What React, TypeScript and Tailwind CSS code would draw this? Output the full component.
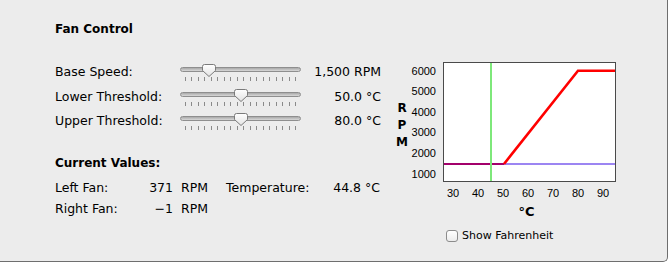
import React from 'react';

const TICKS = Array.from({ length: 18 });

function Slider({ thumb }: { thumb: number }) {
  return (
    <div className="relative w-[121px] h-full flex flex-col pt-[6.5px]">
      <div className="h-[5px] rounded-full border border-[#8e8e8e] bg-gradient-to-b from-[#a9a9a9] to-[#d8d8d8]" />
      <div className="mt-[5.5px] h-[4px] flex justify-between px-[5px]">
        {TICKS.map((_, i) => (
          <div key={i} className="w-px h-full bg-[#8a8a8a]" />
        ))}
      </div>
      <svg
        className="absolute top-[3.5px]"
        style={{ left: thumb }}
        width="14"
        height="13"
        viewBox="0 0 14 13"
      >
        <defs>
          <linearGradient id="thumbFill" x1="0" y1="0" x2="0" y2="1">
            <stop offset="0" stopColor="#ffffff" />
            <stop offset="1" stopColor="#e2e2e2" />
          </linearGradient>
        </defs>
        <path
          d="M2.5 0.5 H11.5 Q13.5 0.5 13.5 2.5 V6.5 L7 12.5 L0.5 6.5 V2.5 Q0.5 0.5 2.5 0.5 Z"
          fill="url(#thumbFill)"
          stroke="#7a7a7a"
          strokeWidth="1"
        />
      </svg>
    </div>
  );
}

function SliderRow({ label, value, thumb, h }: { label: string; value: string; thumb: number; h: string }) {
  return (
    <div className={`flex items-center ${h}`}>
      <div className="w-[125px]">{label}</div>
      <Slider thumb={thumb} />
      <div className="w-[80px] text-right">{value}</div>
    </div>
  );
}

function Chart() {
  const yLabels = ['6000', '5000', '4000', '3000', '2000', '1000'];
  const xLabels = ['30', '40', '50', '60', '70', '80', '90'];
  return (
    <div className="ml-[14px] pt-[2px] flex flex-col">
      <div className="flex">
        <div className="w-[14px] flex flex-col items-center justify-center pt-[4px] font-bold text-[12px] leading-[17px]">
          <span>R</span>
          <span>P</span>
          <span>M</span>
        </div>
        <div className="w-[27px] -mt-[1.5px] flex flex-col text-right font-['Liberation_Sans',sans-serif] text-[11px]">
          {yLabels.map((l) => (
            <div key={l} className="h-[20.66px] leading-[20.66px]">{l}</div>
          ))}
        </div>
        <div className="ml-[7px] w-[173px] h-[120px] border border-[#4a4a4a] bg-white">
          <svg width="171" height="118" viewBox="0 0 171 118" className="block">
            <line x1="0" y1="101" x2="171" y2="101" stroke="#9c85f2" strokeWidth="2" />
            <line x1="0" y1="101" x2="60" y2="101" stroke="#a3006b" strokeWidth="2" />
            <polyline
              points="60,101 134,7.7 171,7.7"
              fill="none"
              stroke="#ff0000"
              strokeWidth="2.6"
            />
            <line x1="47" y1="0" x2="47" y2="118" stroke="#7ee87a" strokeWidth="2" />
          </svg>
        </div>
      </div>
      <div className="mt-[2px] ml-[45.5px] flex h-[14px] leading-[14px] font-['Liberation_Sans',sans-serif] text-[11px]">
        {xLabels.map((l) => (
          <div key={l} className="w-[25px] text-center">{l}</div>
        ))}
      </div>
      <div className="mt-[4px] ml-[48px] w-[173px] pr-[6px] h-[16px] leading-[16px] text-center font-bold text-[13px]">
        °C
      </div>
      <div className="mt-[8px] ml-[51px] flex items-center h-[16px] text-[11px]">
        <div className="w-[12px] h-[12px] rounded-[3px] border border-[#8c8c8c] bg-gradient-to-b from-white to-[#ececec]" />
        <span className="ml-[4px]">Show Fahrenheit</span>
      </div>
    </div>
  );
}

export default function App() {
  return (
    <div className="w-[668px] h-[262px] bg-[#ececec] border-r border-b border-[#6e6e6e] rounded-br-[5px] pl-[55px] pt-[21px] text-black text-[12.5px] font-['DejaVu_Sans',sans-serif] overflow-hidden">
      <div className="h-[16px] leading-[16px] font-bold text-[12px]">Fan Control</div>
      <div className="flex mt-[23px]">
        <div className="w-[326px] flex flex-col">
          <SliderRow label="Base Speed:" value="1,500 RPM" thumb={22.3} h="h-[25px]" />
          <SliderRow label="Lower Threshold:" value="50.0 °C" thumb={53.7} h="h-[24px]" />
          <SliderRow label="Upper Threshold:" value="80.0 °C" thumb={53.7} h="h-[24px]" />
          <div className="mt-[22px] h-[16px] leading-[16px] font-bold text-[12px]">Current Values:</div>
          <div className="mt-[7px] flex items-center h-[21px]">
            <div className="w-[80px]">Left Fan:</div>
            <div className="w-[38px] text-right">371</div>
            <div className="w-[53px] pl-[8px]">RPM</div>
            <div className="w-[100px]">Temperature:</div>
            <div className="w-[54px] text-right">44.8 °C</div>
          </div>
          <div className="flex items-center h-[21px]">
            <div className="w-[80px]">Right Fan:</div>
            <div className="w-[38px] text-right">−1</div>
            <div className="w-[53px] pl-[8px]">RPM</div>
          </div>
        </div>
        <Chart />
      </div>
    </div>
  );
}
